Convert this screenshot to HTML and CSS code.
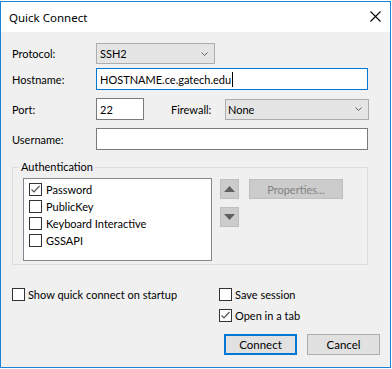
FILE: index.html
```html
<!DOCTYPE html>
<html lang="en">
<head>
    <meta charset="UTF-8">
    <meta name="viewport" content="width=device-width, initial-scale=1.0">
    <title>Quick Connect</title>
    <link rel="stylesheet" href="styles.css">
</head>
<body>
    <div class="window">
        <div class="titlebar">
            <span class="title">Quick Connect</span>
            <svg class="close" width="11" height="11" viewBox="0 0 11 11">
                <path d="M0.5 0.5 L10.5 10.5 M10.5 0.5 L0.5 10.5" stroke="#000" stroke-width="1.1" fill="none"/>
            </svg>
        </div>
        <div class="content">
            <div class="row row-protocol">
                <label class="field-label">Protocol:</label>
                <div class="combo combo-protocol">
                    <span>SSH2</span>
                    <svg class="chevron" width="7" height="4" viewBox="0 0 7 4"><polyline points="0.5,0.5 3.5,3.5 6.5,0.5" fill="none" stroke="#606060"/></svg>
                </div>
            </div>
            <div class="row row-host">
                <label class="field-label">Hostname:</label>
                <div class="textbox textbox-wide textbox-focus">HOSTNAME.ce.gatech.edu<span class="caret"></span></div>
            </div>
            <div class="row row-port">
                <label class="field-label">Port:</label>
                <div class="textbox textbox-port">22</div>
                <label class="firewall-label">Firewall:</label>
                <div class="combo combo-firewall">
                    <span>None</span>
                    <svg class="chevron" width="7" height="4" viewBox="0 0 7 4"><polyline points="0.5,0.5 3.5,3.5 6.5,0.5" fill="none" stroke="#606060"/></svg>
                </div>
            </div>
            <div class="row row-user">
                <label class="field-label">Username:</label>
                <div class="textbox textbox-wide"></div>
            </div>

            <fieldset class="auth">
                <legend>Authentication</legend>
                <div class="auth-body">
                    <div class="listbox">
                        <div class="list-item"><span class="checkbox checked"><svg width="11" height="11" viewBox="0 0 11 11"><polyline points="1.5,5.5 4,8 9.5,2" fill="none" stroke="#555" stroke-width="1.2"/></svg></span>Password</div>
                        <div class="list-item"><span class="checkbox"></span>PublicKey</div>
                        <div class="list-item"><span class="checkbox"></span>Keyboard Interactive</div>
                        <div class="list-item"><span class="checkbox"></span>GSSAPI</div>
                    </div>
                    <div class="arrows">
                        <div class="arrow-btn"><svg width="11" height="6" viewBox="0 0 11 6"><polygon points="0,6 5.5,0 11,6" fill="#606060"/></svg></div>
                        <div class="arrow-btn"><svg width="11" height="6" viewBox="0 0 11 6"><polygon points="0,0 11,0 5.5,6" fill="#606060"/></svg></div>
                    </div>
                    <div class="btn btn-disabled">Properties...</div>
                </div>
            </fieldset>

            <div class="options">
                <div class="option-col option-left">
                    <div class="option"><span class="checkbox"></span>Show quick connect on startup</div>
                </div>
                <div class="option-col">
                    <div class="option"><span class="checkbox"></span>Save session</div>
                    <div class="option"><span class="checkbox checked"><svg width="11" height="11" viewBox="0 0 11 11"><polyline points="1.5,5.5 4,8 9.5,2" fill="none" stroke="#555" stroke-width="1.2"/></svg></span>Open in a tab</div>
                </div>
            </div>

            <div class="actions">
                <div class="btn btn-default">Connect</div>
                <div class="btn">Cancel</div>
            </div>
        </div>
    </div>
</body>
</html>
```

FILE: styles.css
```css
/* Page */
body {
    margin: 0;
    background: #ffffff;
    font-family: 'Lato', 'Noto Sans', sans-serif;
    font-size: 11px;
    color: #000000;
}

/* Window frame */
.window {
    margin-top: 1px;
    width: 389px;
    height: 365px;
    border: 1px solid #1883d7;
    background: #f0f0f0;
    box-shadow: 0 1px 0 #b0b0b0;
}

.titlebar {
    height: 30px;
    background: #ffffff;
    display: flex;
    align-items: center;
    justify-content: space-between;
    padding: 0 9px 0 8px;
}

.title {
    font-family: 'Noto Sans', sans-serif;
    font-size: 11.5px;
}

.close {
    margin-top: -1px;
}

/* Form rows */
.content {
    padding: 11px 0 0 11px;
}

.row {
    display: flex;
    align-items: center;
}

.field-label {
    width: 84px;
}

.row-protocol {
    height: 21px;
    margin-bottom: 4px;
}

.row-host {
    height: 22px;
    margin-bottom: 8px;
}

.row-port {
    height: 22px;
    margin-bottom: 8px;
}

.row-user {
    height: 22px;
}

.combo {
    box-sizing: border-box;
    height: 21px;
    background: #e5e5e5;
    border: 1px solid #adadad;
    display: flex;
    align-items: center;
    justify-content: space-between;
    padding: 0 6px 0 3px;
}

.combo-protocol {
    width: 119px;
}

.combo-firewall {
    width: 144px;
    height: 21px;
    padding-left: 2px;
}

.firewall-label {
    margin-left: 27px;
    width: 54px;
}

.textbox {
    box-sizing: border-box;
    height: 22px;
    background: #ffffff;
    border: 1px solid #7a7a7a;
    display: flex;
    align-items: center;
    padding-left: 3px;
}

.textbox-wide {
    width: 272px;
}

.textbox-port {
    width: 48px;
}

.textbox-focus {
    border-color: #0078d7;
}

.caret {
    display: inline-block;
    width: 1px;
    height: 15px;
    background: #000000;
    margin-left: 1px;
}

/* Authentication group */
.auth {
    box-sizing: border-box;
    width: 356px;
    margin: 9px 0 0 0;
    padding: 3px 0 3px 10px;
    border: 1px solid #dcdcdc;
}

.auth legend {
    padding: 0 2px;
    margin-left: -4px;
    line-height: 16px;
}

.auth-body {
    display: flex;
    align-items: flex-start;
}

.listbox {
    box-sizing: border-box;
    width: 189px;
    height: 83px;
    background: #ffffff;
    border: 1px solid #828790;
    padding: 2px 0 0 5px;
}

.list-item {
    height: 17px;
    display: flex;
    align-items: center;
}

.checkbox {
    box-sizing: border-box;
    width: 13px;
    height: 13px;
    border: 1px solid #333333;
    background: #ffffff;
    margin-right: 4px;
    flex-shrink: 0;
    display: flex;
    align-items: center;
    justify-content: center;
}

.arrows {
    display: flex;
    flex-direction: column;
    gap: 8px;
    margin: 1px 0 0 8px;
}

.arrow-btn {
    box-sizing: border-box;
    width: 19px;
    height: 20px;
    background: #cccccc;
    border: 1px solid #bfbfbf;
    display: flex;
    align-items: center;
    justify-content: center;
}

/* Buttons */
.btn {
    box-sizing: border-box;
    width: 73px;
    height: 21px;
    background: #e1e1e1;
    border: 1px solid #adadad;
    display: flex;
    align-items: center;
    justify-content: center;
    font-size: 11.5px;
}

.btn-disabled {
    width: 94px;
    height: 20px;
    margin: 1px 0 0 10px;
    background: #cccccc;
    border-color: #bfbfbf;
    color: #838383;
    font-size: 11px;
}

.btn-default {
    border: 2px solid #0078d7;
}

/* Bottom options */
.options {
    display: flex;
    margin-top: 23px;
}

.option-col {
    display: flex;
    flex-direction: column;
    gap: 8px;
}

.option-left {
    width: 207px;
}

.option {
    height: 13px;
    display: flex;
    align-items: center;
}

.option .checkbox {
    margin-right: 3px;
}

.actions {
    display: flex;
    gap: 10px;
    margin: 12px 0 0 212px;
}
```
